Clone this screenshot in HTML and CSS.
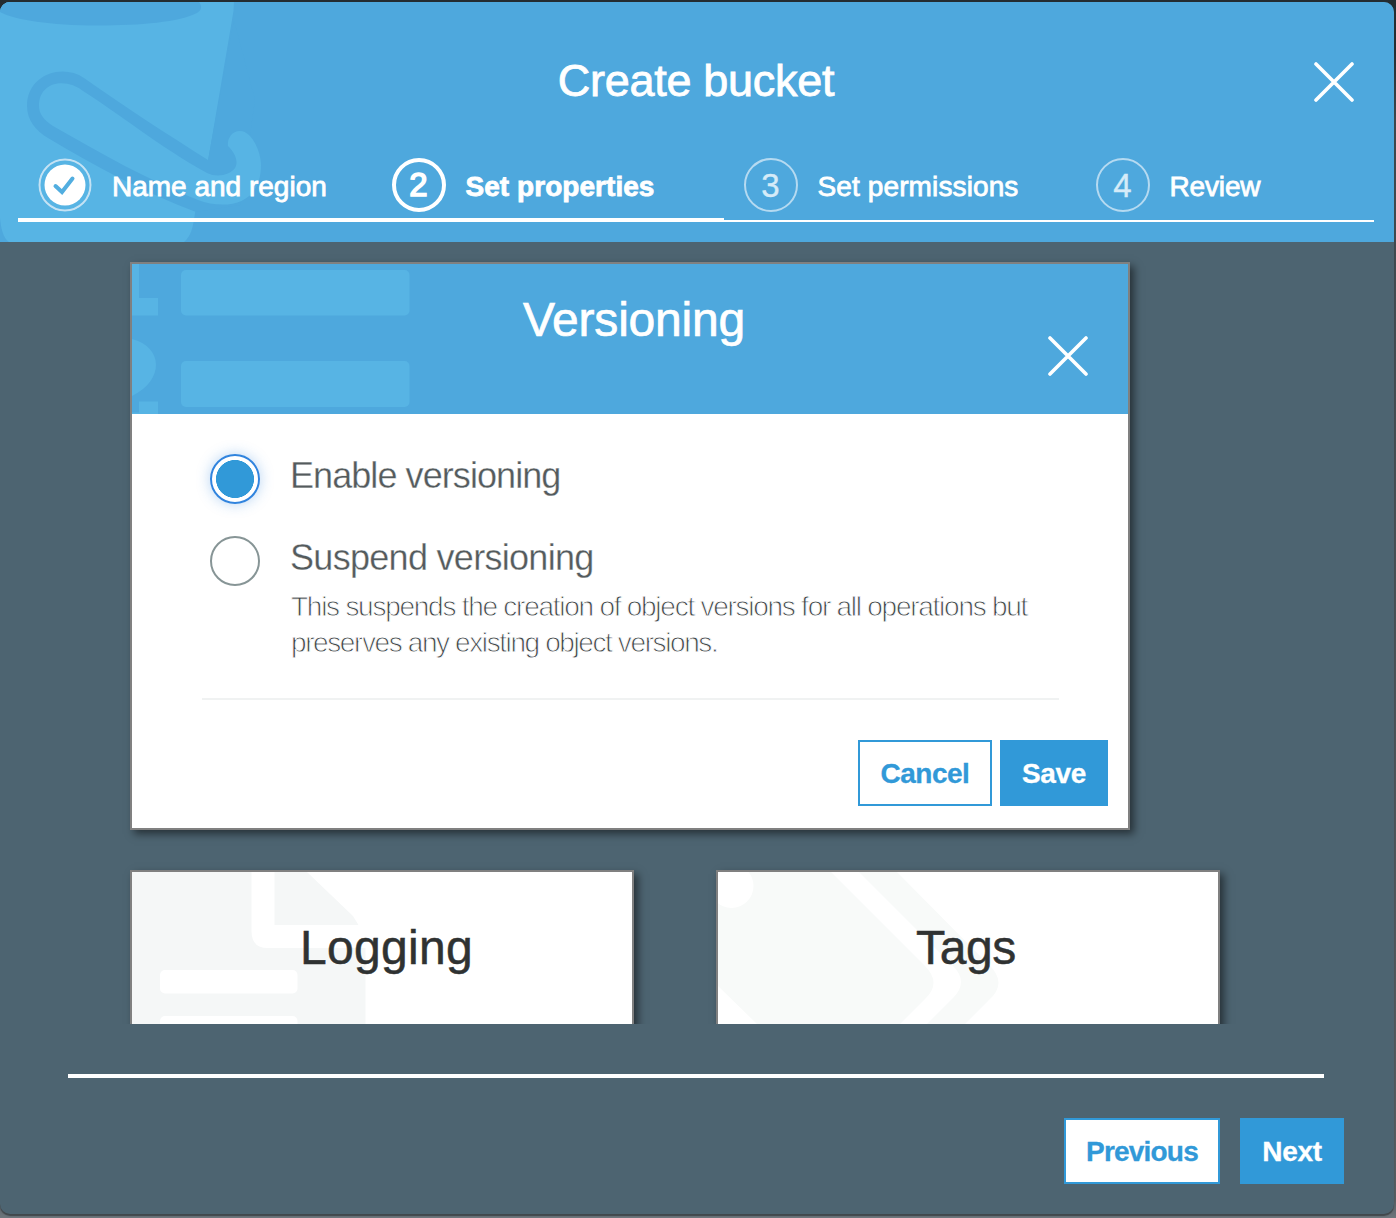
FILE: index.html
```html
<!DOCTYPE html>
<html lang="en">
<head>
<meta charset="utf-8">
<title>Create bucket</title>
<link rel="stylesheet" href="styles.css">
</head>
<body>
<main class="modal">
  <header class="modal-head">
    <svg class="bucket-art" width="270" height="240" viewBox="0 2 270 240" aria-hidden="true">
      <path class="art-light" d="M0 2H234Q234 10 232 20L208 161L195 213C193 228 191 236 184 242H9C3 238 1 228 0 218Z"/>
      <path class="art-base" d="M0 2H199C202 6 202 10 197 13C180 22 140 25.500 98 25.500C50 25.500 15 20 0 12Z"/>
      <path class="art-base" d="M234 20L208 160C170 136 122 105 84 78C62 63 27 75 27 106C27 120 36 131 48 138C95 166 145 193 196 212L240 205L255 100Z"/>
      <path class="art-light" d="M83 91C68 78 39 80 39 106C39 114 44 120 53 126C98 152 150 181 198 200C225 210 261 206 261 165C261 152 252 131 240 131C231 131 227 140 228 146C237 155 238 163 235 168C230 175 217 178 207 173C160 147 118 113 83 91Z"/>
    </svg>
    <div class="title-row">
      <h1 class="modal-title">Create bucket</h1>
      <button class="close" aria-label="Close"><svg width="40" height="40" viewBox="0 0 40 40"><path d="M2 2L38 38M38 2L2 38"/></svg></button>
    </div>
    <ol class="steps">
      <li class="step">
        <svg class="badge" viewBox="0 0 54 54"><circle class="ring" cx="27" cy="27" r="25.500"/><circle cx="27" cy="27" r="20.500" fill="#fff"/><path d="M17.500 28L24 34L34.500 20.500" fill="none" stroke="#52aee0" stroke-width="4" stroke-linecap="round"/></svg>
        <span class="label name">Name and region</span>
      </li>
      <li class="step active"><span class="badge num">2</span><span class="label">Set properties</span></li>
      <li class="step"><span class="badge num">3</span><span class="label perm">Set permissions</span></li>
      <li class="step"><span class="badge num">4</span><span class="label review">Review</span></li>
    </ol>
    <div class="progress"><span class="done"></span></div>
  </header>

  <section class="scroller">
    <article class="card versioning">
      <div class="card-head">
        <svg class="list-art" width="280" height="150" viewBox="132 264 280 150" aria-hidden="true">
          <path class="art-light" d="M132 264H139V298H158V315.500H132ZM132 339C163 347 165 380 132 396ZM139 401.500H158V414H132V412.500H139Z"/>
          <rect class="art-light" x="181" y="270" width="228.500" height="45.500" rx="5"/>
          <rect class="art-light" x="181" y="361" width="228.500" height="46" rx="5"/>
        </svg>
        <h2 class="card-title">Versioning</h2>
        <button class="close" aria-label="Close"><svg width="40" height="40" viewBox="0 0 40 40"><path d="M2 2L38 38M38 2L2 38"/></svg></button>
      </div>
      <div class="card-body">
        <div class="option"><span class="radio checked"></span><span class="option-text enable">Enable versioning</span></div>
        <div class="option second"><span class="radio"></span><span class="option-text suspend">Suspend versioning</span></div>
        <p class="hint"><span class="hint-a">This suspends the creation of object versions for all operations but</span><br><span class="hint-b">preserves any existing object versions.</span></p>
        <div class="actions">
          <button class="btn outline cancel">Cancel</button>
          <button class="btn solid save">Save</button>
        </div>
      </div>
    </article>
    <div class="tiles">
      <article class="card tile">
        <svg class="tile-art" width="240" height="152" viewBox="132 872 240 152" aria-hidden="true">
          <path class="log-art" d="M132 872H251.500V931Q251.500 948 268 948H365.500V1024H132ZM274.500 872H307L353 916L358.500 925H274.500Z"/>
          <rect x="160" y="970" width="137.500" height="23.500" rx="5" fill="#fff"/>
          <rect x="160" y="1016" width="137.500" height="23" rx="5" fill="#fff"/>
        </svg>
        <h2 class="tile-title logging">Logging</h2>
      </article>
      <article class="card tile">
        <svg class="tile-art" width="290" height="152" viewBox="718 872 290 152" aria-hidden="true">
          <path class="tag-art" d="M718 872H831L925 966Q942 983 925 999L900 1024H757L718 986ZM859 872H897L988 964Q1009 983 988 1001L965 1024H927L953 998Q969 982 953 966Z"/>
          <circle cx="731.500" cy="886" r="22" fill="#fff"/>
        </svg>
        <h2 class="tile-title tags">Tags</h2>
      </article>
    </div>
  </section>

  <footer class="modal-foot">
    <button class="btn outline previous">Previous</button>
    <button class="btn solid next">Next</button>
  </footer>
</main>
</body>
</html>
```

FILE: styles.css
```css
* { box-sizing: border-box; }
body {
  margin: 0;
  width: 1396px;
  height: 1218px;
  overflow: hidden;
  padding: 2px 2px 4px 0;
  background: linear-gradient(#242c31 0, #242c31 50px, #3d474d 120px, #565c61 1200px, #6e777d 1218px);
  font-family: "Liberation Sans", Arial, sans-serif;
}
h1, h2, p, ol { margin: 0; padding: 0; font-weight: 400; }
button { font-family: inherit; cursor: pointer; }

.modal {
  display: flex;
  flex-direction: column;
  height: 1212px;
  border-radius: 10px;
  overflow: hidden;
  background: #4d6471;
  box-shadow: 0 2px 1px #42484c;
}
.modal-head {
  position: relative;
  height: 240px;
  flex: none;
  background: #4ea8dd;
  color: #fff;
}
.bucket-art, .list-art, .tile-art { position: absolute; left: 0; top: 0; }
.art-light { fill: #57b4e4; }
.art-base { fill: #4ea8dd; }

.title-row {
  position: relative;
  display: grid;
  grid-template-columns: 1fr auto 1fr;
  align-items: center;
  height: 156px;
  padding: 3px 40px 0 38px;
}
.modal-title {
  grid-column: 2;
  padding-bottom: 2px;
  font-size: 45px;
  line-height: 52px;
  letter-spacing: -0.3px;
  -webkit-text-stroke: 0.8px #fff;
}
.close {
  justify-self: end;
  display: block;
  width: 40px;
  height: 40px;
  padding: 0;
  border: 0;
  background: none;
}
.close svg { display: block; }
.close path { stroke: #fff; stroke-width: 3.6; stroke-linecap: round; fill: none; }

.steps {
  position: relative;
  display: grid;
  grid-template-columns: 353.500px 352px 352px 1fr;
  list-style: none;
  padding-left: 38px;
}
.step { display: flex; align-items: center; gap: 20px; height: 54px; }
.badge { flex: none; width: 54px; height: 54px; border-radius: 50%; }
.ring { fill: none; stroke: #c4e2f4; stroke-width: 2; }
.num {
  display: grid;
  place-items: center;
  padding-top: 2px;
  border: 2.5px solid #b5daf1;
  color: #d5ebf8;
  font-size: 33px;
  line-height: 46px;
  -webkit-text-stroke: 0.4px #d5ebf8;
}
.active .num { padding-top: 0; border: 4px solid #fff; color: #fff; -webkit-text-stroke: 1.5px #fff; }
.label { font-size: 28px; line-height: 32px; padding-top: 4px; -webkit-text-stroke: 0.8px #fff; white-space: nowrap; }
.active .label { font-weight: 700; letter-spacing: 0.05px; }
.perm { letter-spacing: 0.12px; }
.review { letter-spacing: -0.15px; }
.progress {
  position: relative;
  display: flex;
  margin: 6px 20px 0 18px;
  height: 4px;
  align-items: flex-end;
}
.progress::after { content: ""; flex: 1; height: 2px; background: #fff; }
.done { width: 706px; height: 4px; background: #fff; }

.scroller { height: 782px; flex: none; padding: 20px 0 0 130px; overflow: hidden; }
.card {
  position: relative;
  border: 2px solid #808080;
  background: #fff;
  box-shadow: 4px 4px 8px rgba(0, 0, 0, 0.5);
}
.versioning { width: 1000px; height: 568px; }
.card-head {
  position: relative;
  display: grid;
  grid-template-columns: 1fr auto 1fr;
  height: 150px;
  padding: 28px 40px 0 48px;
  background: #4ea8dd;
  color: #fff;
}
.card-title { grid-column: 2; font-size: 48px; line-height: 56px; letter-spacing: -0.2px; -webkit-text-stroke: 0.7px #fff; }
.card-head .close { margin-top: 44px; }

.card-body { padding: 40px 20px 0 70px; }
.option { display: flex; gap: 30px; height: 50px; padding-left: 8px; }
.second { margin-top: 32px; }
.radio { width: 50px; height: 50px; border: 2px solid #879596; border-radius: 50%; }
.radio.checked {
  border-color: #3184de;
  background: radial-gradient(circle, #3199d8 18.700px, #fff 19.300px);
  box-shadow: 0 0 14px rgba(49, 132, 222, 0.35);
}
.option-text { padding-top: 1px; font-size: 36px; line-height: 42px; color: #545b5d; letter-spacing: -0.7px; -webkit-text-stroke: 0.3px #fff; white-space: nowrap; }
.enable { letter-spacing: -0.93px; }
.hint {
  margin-top: 3px;
  padding-left: 89px;
  font-size: 28px;
  line-height: 36px;
  color: #3f4648;
  -webkit-text-stroke: 0.85px #fff;
  white-space: nowrap;
}
.hint-a { letter-spacing: -1.26px; }
.hint-b { letter-spacing: -1.4px; }
.actions {
  display: flex;
  justify-content: flex-end;
  gap: 8px;
  margin-top: 37px;
  padding-top: 42px;
  background: linear-gradient(#f0f2f2, #f0f2f2) 0 0 / 857px 2px no-repeat;
}
.btn {
  height: 66px;
  padding: 2px 0 0;
  border: 2px solid #3199d8;
  border-radius: 0;
  font-size: 28px;
  font-weight: 700;
  line-height: 32px;
  -webkit-text-stroke: 0.3px currentColor;
}
.outline { color: #3199d8; background: #fff; }
.solid { color: #fff; background: #3199d8; }
.cancel { width: 134px; letter-spacing: -0.5px; }
.save { width: 108px; letter-spacing: -0.4px; }
.previous { width: 156px; letter-spacing: -0.8px; }
.next { width: 104px; letter-spacing: -0.3px; }

.tiles { display: flex; gap: 82px; margin-top: 40px; }
.tile { width: 504px; height: 300px; }
.tile-title {
  position: relative;
  padding-top: 48px;
  padding-left: 9px;
  font-size: 48px;
  line-height: 56px;
  text-align: center;
  color: #2f3232;
  -webkit-text-stroke: 0.5px #2f3232;
}
.logging { letter-spacing: 0.3px; }
.tags { padding: 48px 4px 0 0; letter-spacing: -0.4px; }
.log-art { fill: #f5f7f7; }
.tag-art { fill: #f8faf9; }

.modal-foot {
  display: flex;
  justify-content: flex-end;
  gap: 20px;
  margin: 50px 70px 0 68px;
  border-top: 4px solid #fff;
  padding-top: 40px;
}
.modal-foot .next { margin-right: -20px; }
```
